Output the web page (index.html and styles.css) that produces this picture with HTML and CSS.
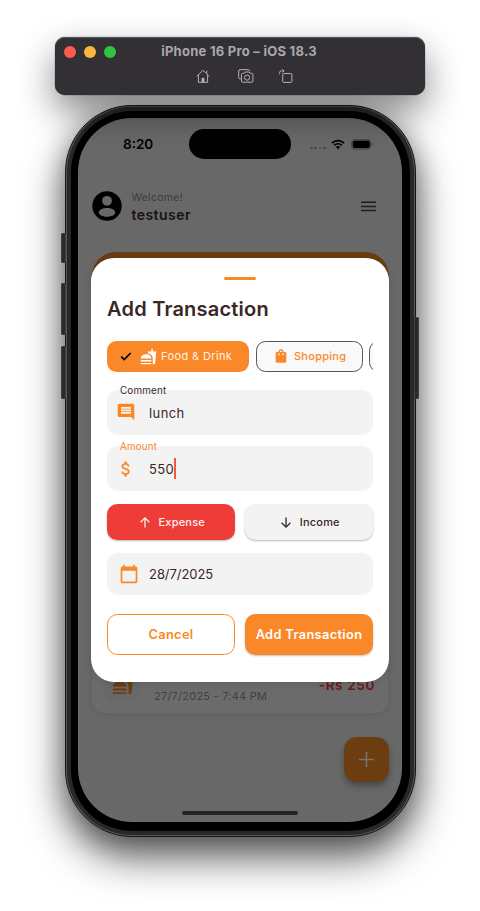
FILE: index.html
```html
<!DOCTYPE html>
<html lang="en">
<head>
<meta charset="utf-8">
<title>iPhone 16 Pro – iOS 18.3</title>
<link rel="stylesheet" href="styles.css">
</head>
<body>
<svg width="0" height="0" class="defs">
  <symbol id="food" viewBox="0 0 24 24"><path d="M18.06 22.99h1.66c.84 0 1.53-.64 1.63-1.46L23 5.05h-5V1h-1.97v4.05h-4.97l.3 2.34c1.71.47 3.31 1.32 4.27 2.26 1.44 1.42 2.43 2.89 2.43 5.29v8.05zM1 21.99V21h15.03v.99c0 .55-.45 1-1.01 1H2.01c-.56 0-1.01-.45-1.01-1zm15.03-7c0-8-15.03-8-15.03 0h15.03zM1.02 17h15v2h-15z"/></symbol>
</svg>
<header class="titlebar">
  <div class="titlerow">
    <div class="lights"><i class="red"></i><i class="yellow"></i><i class="green"></i></div>
    <div class="wintitle">iPhone 16 Pro – iOS 18.3</div>
  </div>
  <div class="tools">
    <svg width="14" height="14" viewBox="0 0 14 14"><path d="M.8 7.4 7 1.2l6.2 6.2M2.4 6v7.3h9.2V6M10.8 4.6V1.8"/><path class="solid" d="M5.6 8.8h2.8v4.5H5.6z"/></svg>
    <svg width="16" height="14" viewBox="0 0 16 14"><path d="M2.8 9.8H2A1.3 1.3 0 0 1 .7 8.500V2A1.300 1.300 0 0 1 2 .700h8.300a1.300 1.300 0 0 1 1.300 1.300M4.600 4.300h1.500l1-1.300h4l1 1.300h1.600a1.200 1.200 0 0 1 1.200 1.200v6.500a1.200 1.200 0 0 1-1.200 1.200H4.700a1.200 1.200 0 0 1-1.200-1.200V5.500a1.200 1.200 0 0 1 1.100-1.200z"/><circle cx="9.100" cy="8.600" r="2.600"/></svg>
    <svg width="14" height="14" viewBox="0 0 14 14"><rect x="3.700" y="4.600" width="9.200" height="8.800" rx="1"/><path d="M.6 5.200V3.600a1.700 1.700 0 0 1 1.700-1.700h2.500M3.500.3l1.600 1.600-1.600 1.600"/></svg>
  </div>
</header>

<main class="phone">
  <i class="side action"></i><i class="side volup"></i><i class="side voldown"></i><i class="side power"></i>
  <div class="rim"><div class="bezel"><div class="screen">
    <div class="status">
      <span class="clock">8:20</span>
      <i class="island"></i>
      <span class="dots"><i></i><i></i><i></i><i></i></span>
      <svg class="wifi" width="14" height="11" viewBox="0 0 14 11"><path d="M1 4.100a8.700 8.700 0 0 1 12 0M3.200 6.300a5.600 5.600 0 0 1 7.600 0"/><path class="tip" d="M7 10.200 4.900 8.100a3 3 0 0 1 4.200 0z"/></svg>
      <svg width="23" height="11" viewBox="0 0 23 11"><rect x=".6" y=".6" width="19.300" height="9.600" rx="3" fill="#575757" stroke="#484848"/><rect x="1.800" y="1.700" width="17" height="7.400" rx="2.100"/><path d="M20.900 3.800c1.600.5 1.600 2.700 0 3.200z" fill="#484848"/></svg>
    </div>
    <div class="profile">
      <svg width="30" height="30" viewBox="0 0 30 30"><circle cx="15" cy="15" r="14.700"/><circle cx="15" cy="9.800" r="4.900" fill="#686868"/><path d="M15 17.100c4.400 0 8.200 1.800 8.200 4.500 0 2.800-4.400 4.200-8.200 4.200s-8.200-1.400-8.200-4.200c0-2.700 3.800-4.500 8.200-4.500z" fill="#686868"/></svg>
      <div class="who"><span class="welcome">Welcome!</span><b>testuser</b></div>
      <svg class="menu" width="15" height="11" viewBox="0 0 15 11"><path d="M0 1.300h15M0 5.400h15M0 9.500h15"/></svg>
    </div>
    <div class="balance"></div>
    <div class="entry">
      <div class="tile"><svg width="22" height="22"><use href="#food"/></svg></div>
      <span class="when">27/7/2025 - 7:44 PM</span>
      <span class="spent">-Rs 250</span>
    </div>
    <div class="fab"><svg width="15" height="15" viewBox="0 0 15 15"><path d="M7.500 0v15M0 7.500h15"/></svg></div>
    <div class="home"></div>

    <section class="dialog">
      <div class="handle"></div>
      <h1>Add Transaction</h1>
      <div class="chips">
        <div class="chip chosen">
          <svg class="check" width="12" height="9" viewBox="0 0 12 9"><path d="m1.200 4.600 3 3L10.700 1"/></svg>
          <svg class="meal" width="17" height="17"><use href="#food"/></svg><span>Food &amp; Drink</span>
        </div>
        <div class="chip plain">
          <svg width="16" height="16" viewBox="0 0 24 24"><path d="M18 6h-2c0-2.210-1.790-4-4-4S8 3.790 8 6H6c-1.100 0-2 .9-2 2v12c0 1.100.9 2 2 2h12c1.100 0 2-.9 2-2V8c0-1.100-.9-2-2-2zm-8 4c0 .55-.45 1-1 1s-1-.45-1-1V8h2v2zm2-6c1.100 0 2 .9 2 2h-4c0-1.100.9-2 2-2zm4 6c0 .55-.45 1-1 1s-1-.45-1-1V8h2v2z"/></svg><span>Shopping</span>
        </div>
        <div class="chip plain next"></div>
      </div>
      <div class="field">
        <label>Comment</label>
        <svg width="20" height="20" viewBox="0 0 24 24"><path d="M21.990 4c0-1.100-.89-2-1.990-2H4c-1.100 0-2 .9-2 2v12c0 1.100.9 2 2 2h14l4 4-.01-18zM18 14H6v-2h12v2zm0-3H6V9h12v2zm0-3H6V6h12v2z"/></svg><span>lunch</span>
      </div>
      <div class="field amount">
        <label>Amount</label>
        <svg width="20" height="20" viewBox="0 0 24 24"><path d="M11.800 10.900c-2.270-.59-3-1.200-3-2.150 0-1.090 1.010-1.850 2.700-1.850 1.780 0 2.440.85 2.500 2.100h2.210c-.07-1.720-1.120-3.300-3.210-3.810V3h-3v2.160c-1.940.42-3.500 1.680-3.500 3.610 0 2.310 1.910 3.460 4.700 4.130 2.500.6 3 1.480 3 2.410 0 .69-.49 1.790-2.700 1.790-2.060 0-2.870-.92-2.980-2.100h-2.200c.12 2.190 1.760 3.420 3.680 3.830V21h3v-2.150c1.950-.37 3.500-1.500 3.500-3.550 0-2.840-2.430-3.810-4.700-4.400z"/></svg><span>550</span><i class="caret"></i>
      </div>
      <div class="pair kinds">
        <div class="btn expense"><svg width="10" height="11" viewBox="0 0 10 11"><path d="M5 10.500V1M.6 5.200 5 .9l4.400 4.300"/></svg>Expense</div>
        <div class="btn income"><svg width="10" height="11" viewBox="0 0 10 11"><path d="M5 .5V10M.6 5.800 5 10.100l4.400-4.300"/></svg>Income</div>
      </div>
      <div class="field date">
        <svg width="20" height="20" viewBox="0 0 24 24"><path d="M20 3h-1V1h-2v2H7V1H5v2H4c-1.100 0-2 .9-2 2v16c0 1.100.9 2 2 2h16c1.100 0 2-.9 2-2V5c0-1.100-.9-2-2-2zm0 18H4V8h16v13z"/></svg><span>28/7/2025</span>
      </div>
      <div class="pair actions">
        <div class="btn cancel">Cancel</div>
        <div class="btn add">Add Transaction</div>
      </div>
    </section>
  </div></div></div>
</main>
</body>
</html>
```

FILE: styles.css
```css
* { box-sizing: border-box; }
html { overflow: hidden; background: #fff; }
body { margin: 0; height: 911px; padding-top: 37px; overflow: hidden; font-family: Inter, "Liberation Sans", sans-serif; color: #3a2726; }
svg { display: block; flex: none; }
.defs { position: absolute; }

.titlebar { width: 370px; height: 58px; margin: 0 auto; background: #322f35; border-radius: 10px; position: relative; z-index: 2; box-shadow: 0 0 1px #000, inset 0 1px 0 #59575c, 0 16px 36px rgba(0,0,0,.48); }
.titlerow { display: grid; grid-template-columns: 60px 1fr 62px; height: 28px; align-items: center; padding-left: 9px; }
.lights { display: flex; gap: 8px; padding-top: 2px; }
.lights i { width: 12px; height: 12px; border-radius: 50%; }
.red { background: #ff5a52; }
.yellow { background: #fcb63c; }
.green { background: #2dc53f; }
.wintitle { text-align: center; font-size: 13px; line-height: 16px; letter-spacing: .26px; font-weight: 700; color: #aaa8ac; white-space: nowrap; padding: 0 9px 1px 0; }
.tools { display: flex; align-items: center; height: 22px; padding-left: 140.500px; }
.tools svg { fill: none; stroke: #b4b2b6; stroke-width: 1; margin-right: 28.500px; }
.tools svg + svg { margin-right: 25px; }
.tools .solid { fill: #b4b2b6; stroke: none; }

.phone { position: relative; width: 351px; height: 732px; margin: 9.5px auto 0; border-radius: 67px; background: #555; border: 1px solid #171717; padding: 1px; box-shadow: 0 20px 40px rgba(0,0,0,.64), 0 4px 26px rgba(0,0,0,.24); }
.rim { height: 100%; background: #282828; border-radius: 65px; padding: 4px; }
.bezel { height: 100%; background: #000; border-radius: 61px; padding: 7.500px; }
.screen { position: relative; overflow: hidden; width: 324px; height: 704px; border-radius: 54px; background: #686868; margin: 0 auto; }
.side { position: absolute; width: 5px; left: -5px; background: #292929; border-radius: 2px; box-shadow: inset 0 0 0 1px #414141; }
.action { top: 127px; height: 30px; }
.volup { top: 177px; height: 52px; }
.voldown { top: 240px; height: 53px; }
.power { left: auto; right: -4px; top: 211px; height: 82px; }

.status { display: flex; align-items: center; height: 52px; padding: 0 28px 0 45px; color: #000; }
.clock { font-size: 13.500px; font-weight: 600; width: 66px; flex: none; }
.island { width: 102px; height: 30px; border-radius: 15px; background: #000; flex: none; }
.dots { display: flex; gap: 1.700px; margin: 8px 5px 0 19px; }
.dots i { width: 2.700px; height: 2.700px; border-radius: 50%; background: #484848; }
.wifi { margin-right: 6px; fill: none; stroke: #000; stroke-width: 1.800; }
.wifi .tip { fill: #000; stroke: none; }
.profile { display: flex; align-items: center; height: 32px; margin: 20px 26px 0 14px; }
.who { display: flex; flex-direction: column; margin-left: 9.500px; padding-top: 2px; }
.welcome { font-size: 10.500px; line-height: 15px; letter-spacing: .3px; color: #403b3b; }
.who b { font-size: 14px; font-weight: 600; line-height: 20px; letter-spacing: .45px; color: #1b1212; }
.menu { margin-left: auto; stroke: #241b1b; stroke-width: 1.500; }
.balance { height: 180px; margin: 29.500px 13.500px 0; border-radius: 24px; background: #6b3d10; }
.entry { display: flex; margin: 219.500px 14px 0; height: 62px; padding: 12px 13px 0 13px; border-radius: 13px; background: #6b6b6b; box-shadow: 0 3px 8px rgba(0,0,0,.06); }
.tile { width: 35px; height: 35px; margin-top: 3px; border-radius: 8px; background: #696867; display: grid; place-items: center; fill: #6b3d10; }
.when { font-size: 11px; letter-spacing: .24px; white-space: nowrap; margin: 26px 0 0 14px; color: #444040; }
.spent { margin: 12px 0 0 auto; white-space: nowrap; font-size: 13.500px; line-height: 20px; font-weight: 600; letter-spacing: .65px; color: #671b18; }
.fab { width: 45px; height: 45px; margin: 23.500px 13px 0 auto; border-radius: 13px; background: #6b3d10; display: grid; place-items: center; box-shadow: 0 4px 6px rgba(0,0,0,.3); stroke: #777069; stroke-width: 1.700; }
.home { width: 116px; height: 4.500px; margin: 29px auto 0; border-radius: 3px; background: #222; }

.dialog { position: absolute; left: 13px; top: 140px; width: 298px; height: 424px; border-radius: 23px; background: #fff; padding: 19px 16px 0; box-shadow: 0 1px 8px rgba(0,0,0,.12); }
.handle { width: 32px; height: 3px; margin: 0 auto; border-radius: 2px; background: #fa8828; }
h1 { margin: 16px 0 0; font-size: 20px; line-height: 26px; font-weight: 600; letter-spacing: .22px; white-space: nowrap; }
.chips { display: flex; gap: 6.500px; overflow: hidden; height: 31px; margin-top: 18.500px; }
.chip { flex: none; display: flex; align-items: center; height: 31px; border-radius: 9.500px; font-size: 11px; letter-spacing: .38px; white-space: nowrap; }
.chosen { width: 142px; background: #fa8828; color: #fff3e6; padding-left: 13px; fill: #fff; }
.check { fill: none; stroke: #000; stroke-width: 1.700; }
.meal { margin: 0 4px 0 8px; }
.plain { width: 107px; padding-left: 16px; background: #f9f9f9; border: 1px solid #62504f; color: #fa8828; fill: #fa8828; gap: 5.500px; font-weight: 500; letter-spacing: .26px; }
.field { position: relative; display: flex; align-items: center; height: 45px; margin-top: 18px; padding-left: 9px; background: #f3f3f3; border-radius: 11px; fill: #fa8828; font-size: 13px; letter-spacing: .4px; }
.field span { margin-left: 13px; padding-top: 1px; }
.field label { position: absolute; left: 13px; top: -6px; line-height: 14px; font-size: 9.800px; letter-spacing: .2px; }
.field.amount { margin-top: 11.500px; }
.amount label { color: #fa8828; }
.caret { width: 1.500px; height: 21px; background: #ef5b32; }
.pair { display: grid; grid-template-columns: 128px 128px; gap: 10px; }
.kinds { margin-top: 13px; height: 36px; }
.btn { display: flex; align-items: center; justify-content: center; border-radius: 10.500px; white-space: nowrap; }
.kinds .btn { gap: 9px; padding-left: 2.500px; font-size: 11px; font-weight: 500; letter-spacing: .2px; box-shadow: 0 1px 2px rgba(0,0,0,.28); }
.kinds svg { fill: none; stroke: currentColor; stroke-width: 1.300; }
.expense { background: #ee3d38; color: #fff0ef; }
.income { background: #f3f3f3; }
.field.date { height: 42px; margin-top: 12.500px; padding-left: 12px; }
.date span { margin-left: 10px; letter-spacing: -.05px; padding-top: 0; }
.actions { margin-top: 19px; height: 41.500px; }
.actions .btn { font-size: 12.800px; font-weight: 600; letter-spacing: .35px; }
.cancel { border: 1.300px solid #fa8828; color: #fa8828; }
.add { background: #fa8828; color: #fff; box-shadow: 0 1px 2px rgba(0,0,0,.25); }
```
